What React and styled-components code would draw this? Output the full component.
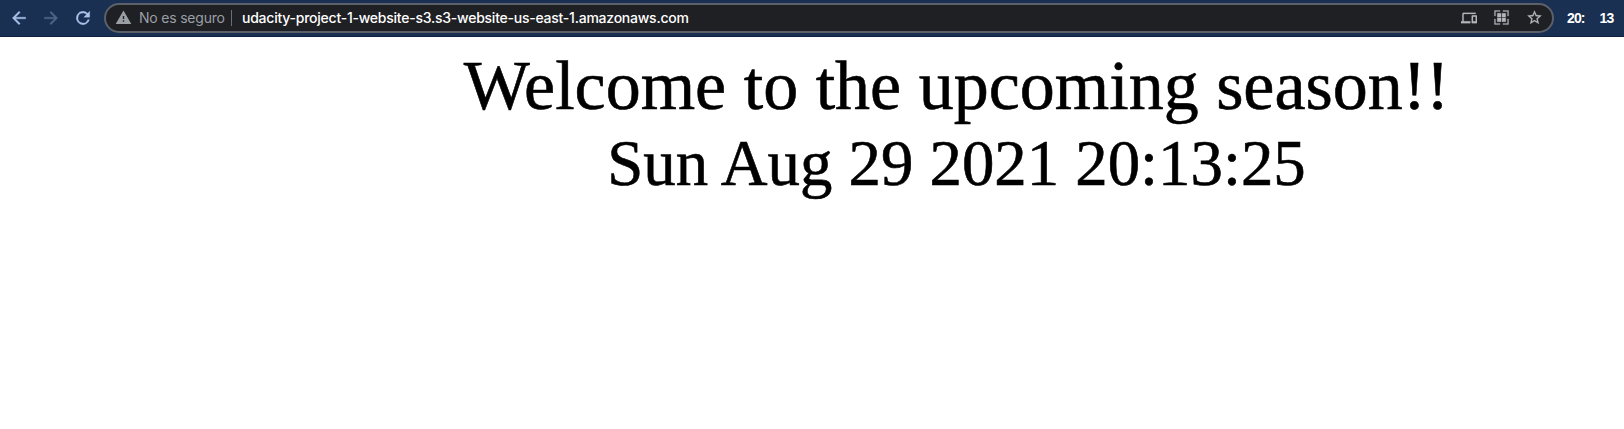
import React from "react";
import styled, { createGlobalStyle } from "styled-components";

const GlobalStyle = createGlobalStyle`
  * { box-sizing: border-box; }
  body { margin: 0; background: #fff; overflow: hidden; }
`;

const Page = styled.div`
  display: flex;
  flex-direction: column;
  height: 429px;
`;

const Toolbar = styled.header`
  display: flex;
  align-items: center;
  height: 37px;
  padding: 0 0 1px 9px;
  background: #1a3052;
  border-bottom: 1px solid #0f2140;
  font-family: Inter, "Liberation Sans", sans-serif;
`;

const Navigation = styled.nav`
  display: flex;
  gap: 12px;
`;

const NavButton = styled.button`
  display: flex;
  padding: 0;
  border: 0;
  background: none;
  color: ${({ $dim }) => ($dim ? "#4d6789" : "#a9c3ec")};
  svg { stroke: currentColor; stroke-width: 0.4px; }
`;

const AddressBar = styled.div`
  display: flex;
  align-items: center;
  width: 1450px;
  height: 30px;
  margin-left: 11px;
  padding: 0 9px;
  border: 2px solid #5b6069;
  border-radius: 15px;
  background: #1f2024;
`;

const Warning = styled.span`
  display: flex;
  align-items: center;
  color: #9a9fa5;
`;

const Label = styled.span`
  width: 86px;
  margin-left: 7px;
  font: 14px/20px Inter, sans-serif;
  letter-spacing: -0.2px;
  white-space: nowrap;
`;

const Divider = styled.span`
  width: 1px;
  height: 16px;
  margin: 0 10px 0 6px;
  background: #6b6e73;
`;

const Url = styled.span`
  flex: 1;
  color: #fff;
  font: 500 14px/20px Inter, sans-serif;
  letter-spacing: -0.24px;
  white-space: nowrap;
`;

const Actions = styled.div`
  display: flex;
  align-items: center;
  gap: 16px;
  color: #b4b7bb;
  svg { display: block; stroke: currentColor; stroke-width: 0.3px; }
`;

const Clock = styled.div`
  display: flex;
  gap: 15px;
  margin-left: 13px;
  color: #fff;
  font: bold 14px/20px "Liberation Sans", sans-serif;
  letter-spacing: -0.9px;
`;

const Content = styled.main`
  margin-left: 289px;
  padding-top: 8px;
  color: #000;
  font-family: "Liberation Serif", serif;
  text-align: center;
  white-space: nowrap;
  -webkit-text-stroke: 0.6px #000;
`;

const Welcome = styled.div`
  font-size: 70px;
  line-height: 82px;
`;

const DateLine = styled.div`
  font-size: 64.8px;
  line-height: 72px;
`;

const Icon = ({ path, size = 20 }) => (
  <svg width={size} height={size} viewBox="0 0 24 24" fill="currentColor" aria-hidden="true">
    <path d={path} />
  </svg>
);

const icons = {
  back: "M20 11H7.8l5.6-5.6L12 4l-8 8 8 8 1.4-1.4L7.8 13H20z",
  forward: "M4 11h12.2l-5.6-5.6L12 4l8 8-8 8-1.4-1.4 5.6-5.6H4z",
  reload: "M17.65 6.35A8 8 0 1 0 19.73 14h-2.08A6 6 0 1 1 12 6c1.66 0 3.14.69 4.22 1.78L13 11h7V4z",
  warning: "M1 21h22L12 2zm12-3h-2v-2h2zm0-4h-2v-4h2z",
  devices: "M4 6h18V4H4c-1.1 0-2 .9-2 2v11H0v3h14v-3H4zm19 2h-6c-.55 0-1 .45-1 1v10c0 .55.45 1 1 1h6c.55 0 1-.45 1-1V9c0-.55-.45-1-1-1m-1 9h-4v-7h4z",
  qr: "M2 2h8v1.5H3.5V10H2zM14 2h8v8h-1.5V3.5H14zM2 14h1.5v6.5H10V22H2zM20.5 14H22v8h-8v-1.5h6.5zM6 6h5.5v5.5H6zm6.8 0H18v5.5h-5.2zM6 12.8h5.5V18H6zm6.8 0H18V18h-5.2z",
  star: "M22 9.24l-7.19-.62L12 2 9.19 8.63 2 9.24l5.46 4.73L5.82 21 12 17.27 18.18 21l-1.63-7.03zM12 15.4l-3.76 2.27 1-4.28-3.32-2.88 4.38-.38L12 6.1l1.71 4.04 4.38.38-3.32 2.88 1 4.28z",
};

export default function App() {
  return (
    <Page>
      <GlobalStyle />
      <Toolbar>
        <Navigation>
          <NavButton aria-label="Atrás"><Icon path={icons.back} /></NavButton>
          <NavButton aria-label="Adelante" $dim><Icon path={icons.forward} /></NavButton>
          <NavButton aria-label="Recargar"><Icon path={icons.reload} /></NavButton>
        </Navigation>
        <AddressBar>
          <Warning>
            <Icon path={icons.warning} size={17} />
            <Label>No es seguro</Label>
          </Warning>
          <Divider />
          <Url>udacity-project-1-website-s3.s3-website-us-east-1.amazonaws.com</Url>
          <Actions>
            <Icon path={icons.devices} size={16} />
            <Icon path={icons.qr} size={17} />
            <Icon path={icons.star} size={17} />
          </Actions>
        </AddressBar>
        <Clock><span>20:</span><span>13</span></Clock>
      </Toolbar>
      <Content>
        <Welcome>Welcome to the upcoming season!!</Welcome>
        <DateLine>Sun Aug 29 2021 20:13:25</DateLine>
      </Content>
    </Page>
  );
}
